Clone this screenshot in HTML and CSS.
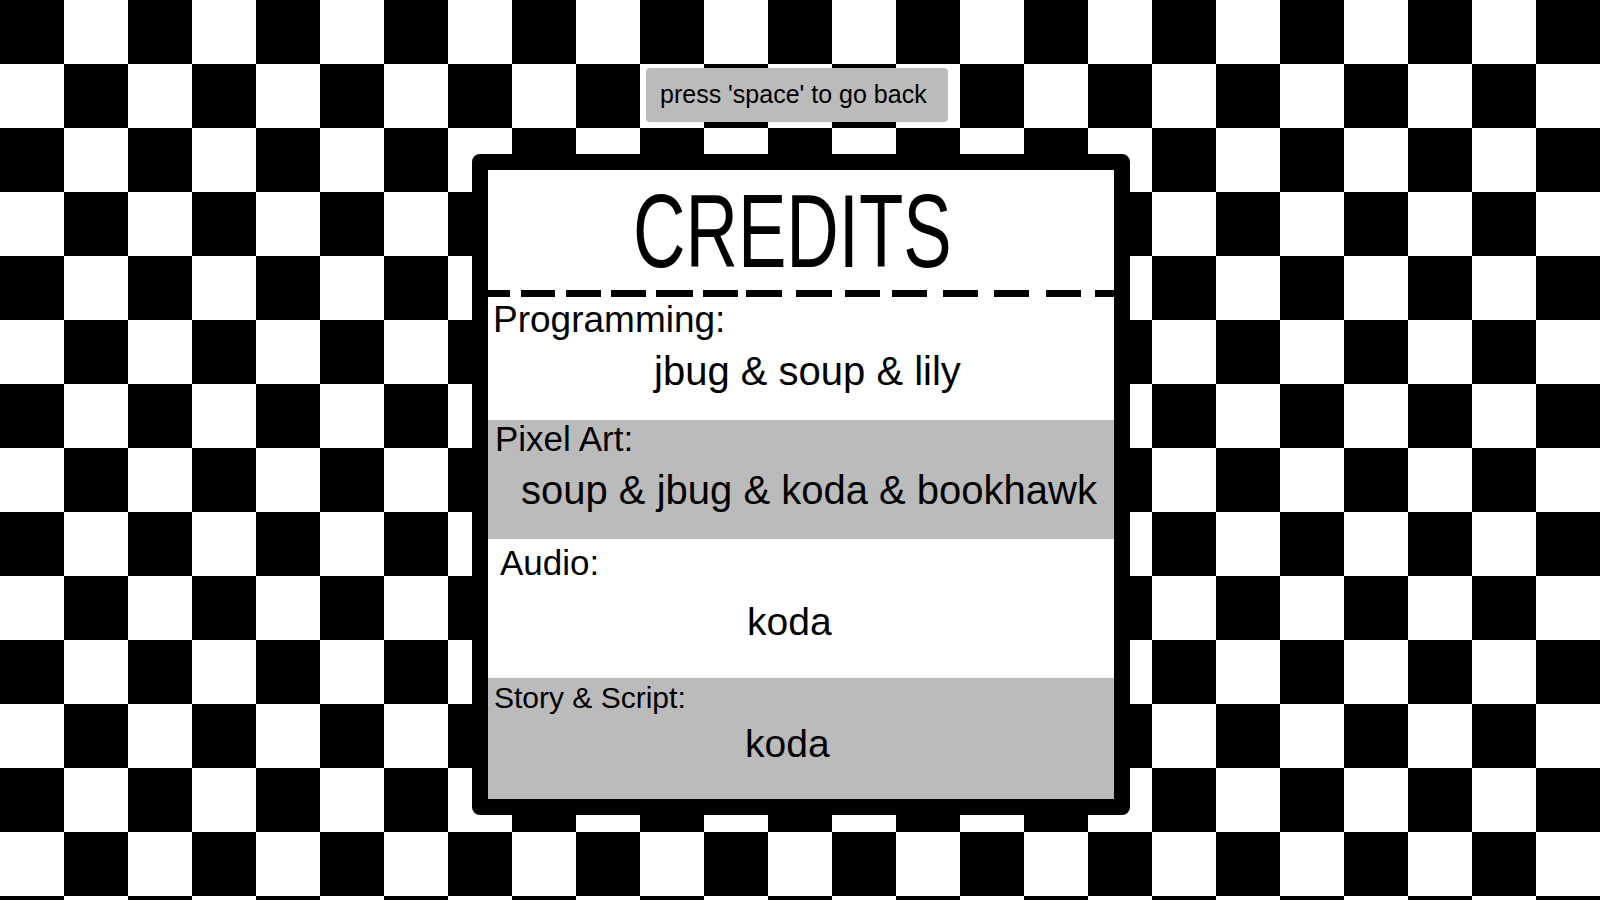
FILE: index.html
```html
<!DOCTYPE html>
<html lang="en">
<head>
<meta charset="utf-8">
<title>Credits</title>
<link rel="stylesheet" href="styles.css">
</head>
<body>
<main class="screen">
  <div class="hint">press 'space' to go back</div>
  <section class="panel">
    <header class="panel-title">
      <h1 class="title-text">CREDITS</h1>
    </header>
    <svg class="divider" width="626" height="7" viewBox="0 0 626 7" aria-hidden="true">
      <rect x="0" y="0" width="22" height="7"/>
      <rect x="33" y="0" width="34" height="7"/>
      <rect x="78" y="0" width="35" height="7"/>
      <rect x="123" y="0" width="35" height="7"/>
      <rect x="168" y="0" width="37" height="7"/>
      <rect x="215" y="0" width="35" height="7"/>
      <rect x="258" y="0" width="36" height="7"/>
      <rect x="308" y="0" width="36" height="7"/>
      <rect x="357" y="0" width="35" height="7"/>
      <rect x="404" y="0" width="35" height="7"/>
      <rect x="455" y="0" width="35" height="7"/>
      <rect x="506" y="0" width="35" height="7"/>
      <rect x="558" y="0" width="35" height="7"/>
      <rect x="607" y="0" width="19" height="7"/>
    </svg>
    <div class="credit credit--programming">
      <p class="role">Programming:</p>
      <p class="names">jbug &amp; soup &amp; lily</p>
    </div>
    <div class="credit credit--pixel shaded">
      <p class="role">Pixel Art:</p>
      <p class="names">soup &amp; jbug &amp; koda &amp; bookhawk</p>
    </div>
    <div class="credit credit--audio">
      <p class="role">Audio:</p>
      <p class="names">koda</p>
    </div>
    <div class="credit credit--story shaded">
      <p class="role">Story &amp; Script:</p>
      <p class="names">koda</p>
    </div>
  </section>
</main>
</body>
</html>
```
FILE: styles.css
```css
html, body {
  margin: 0;
  padding: 0;
}

body {
  width: 1600px;
  height: 900px;
  overflow: hidden;
  font-family: "Liberation Sans", Arial, sans-serif;
  color: #000;
  background-color: #fff;
  background-image: repeating-conic-gradient(#fff 0 25%, #000 0 50%);
  background-size: 128px 128px;
  background-position: 0 0;
}

.screen {
  display: flex;
  flex-direction: column;
  align-items: center;
  padding-top: 68px;
}

.hint {
  box-sizing: border-box;
  width: 302px;
  height: 54px;
  margin-right: 6px;
  padding: 14px 0 0 14px;
  background: #bbbbbb;
  border-radius: 4px;
  font-size: 25px;
  line-height: 25px;
  white-space: nowrap;
}

.panel {
  width: 626px;
  margin-top: 32px;
  margin-left: 2px;
  border: 16px solid #000;
  border-radius: 8px;
  background: #fff;
  display: flex;
  flex-direction: column;
}

.panel-title {
  height: 120px;
  box-sizing: border-box;
  padding: 10px 0 0 145px;
}

.title-text {
  margin: 0;
  display: inline-block;
  font-weight: normal;
  font-size: 103px;
  line-height: 103px;
  transform: scaleX(0.705);
  transform-origin: left top;
  white-space: nowrap;
}

.divider {
  display: block;
  fill: #000;
}

.credit {
  box-sizing: border-box;
  display: flex;
  flex-direction: column;
}

.credit p {
  margin: 0;
  white-space: nowrap;
}

.shaded {
  background: #bbbbbb;
}

.role {
  font-size: 37px;
  line-height: 37px;
}

.names {
  font-size: 40px;
  line-height: 40px;
}

.credit--programming {
  height: 123px;
  padding-top: 4px;
}
.credit--programming .role { padding-left: 5px; }
.credit--programming .names { padding-left: 166px; margin-top: 13px; }

.credit--pixel {
  height: 119px;
  padding-top: 1px;
}
.credit--pixel .role { font-size: 35px; line-height: 35px; padding-left: 7px; }
.credit--pixel .names { padding-left: 33px; margin-top: 14px; }

.credit--audio {
  height: 139px;
  padding-top: 6px;
}
.credit--audio .role { font-size: 35px; line-height: 35px; padding-left: 12px; }
.credit--audio .names { font-size: 39px; line-height: 39px; padding-left: 259px; margin-top: 22px; }

.credit--story {
  height: 121px;
  padding-top: 5px;
}
.credit--story .role { font-size: 30px; line-height: 30px; padding-left: 6px; }
.credit--story .names { font-size: 39px; line-height: 39px; padding-left: 257px; margin-top: 11px; }
```
